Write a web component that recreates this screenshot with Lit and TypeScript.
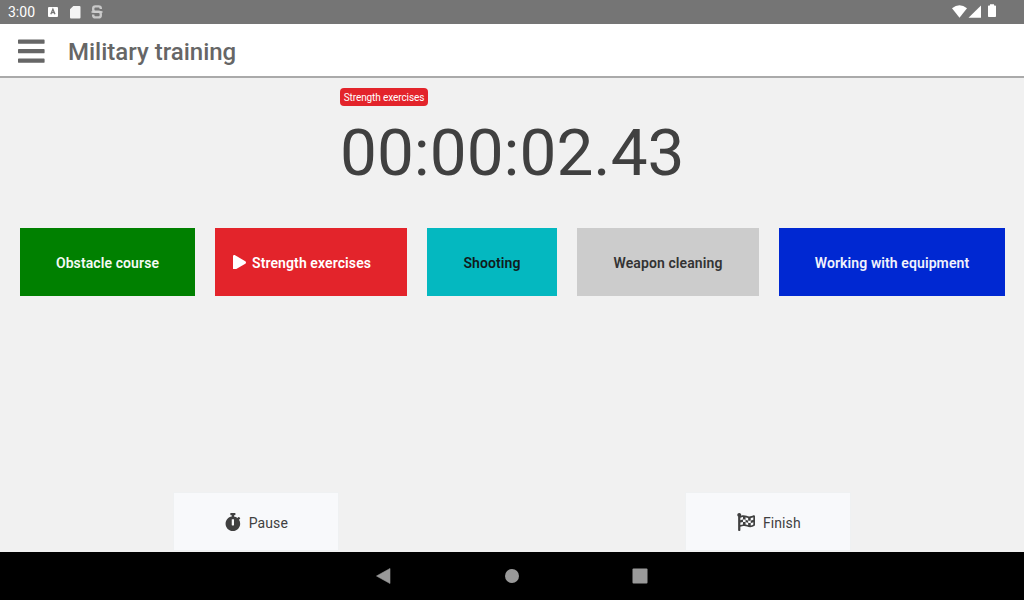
import { LitElement, html, css, svg } from "lit";
import { customElement } from "lit/decorators.js";
import { styleMap } from "lit/directives/style-map.js";

const BARS = "M16 132h416c8.837 0 16-7.163 16-16V76c0-8.837-7.163-16-16-16H16C7.163 60 0 67.163 0 76v40c0 8.837 7.163 16 16 16zm0 160h416c8.837 0 16-7.163 16-16v-40c0-8.837-7.163-16-16-16H16c-8.837 0-16 7.163-16 16v40c0 8.837 7.163 16 16 16zm0 160h416c8.837 0 16-7.163 16-16v-40c0-8.837-7.163-16-16-16H16c-8.837 0-16 7.163-16 16v40c0 8.837 7.163 16 16 16z";
const STOPWATCH = "M432 304c0 114.900-93.100 208-208 208S16 418.900 16 304c0-104 76.300-190.200 176-205.500V64h-28c-6.600 0-12-5.400-12-12V12c0-6.600 5.400-12 12-12h120c6.600 0 12 5.400 12 12v40c0 6.600-5.400 12-12 12h-28v34.500c37.500 5.800 71.700 21.600 99.700 44.600l27.500-27.500c4.700-4.700 12.300-4.700 17 0l28.300 28.300c4.700 4.700 4.700 12.300 0 17l-29.400 29.400-.6.6C419.700 223.300 432 262.200 432 304zm-176 36V188.500c0-6.600-5.400-12-12-12h-40c-6.600 0-12 5.400-12 12V340c0 6.600 5.400 12 12 12h40c6.600 0 12-5.400 12-12z";
const FLAG = "M243.2 189.900V258c26.100 5.900 49.300 15.600 73.600 22.300v-68.200c-26-5.800-49.400-15.500-73.600-22.200zm223.300-123c-34.300 15.900-76.500 31.900-117 31.900C296 98.800 251.700 64 184.300 64c-25 0-47.300 4.400-68 12 2.800-7.300 4.100-15.200 3.600-23.600C118.100 24 94.800 1.200 66.300 0 34.300-1.300 8 24.300 8 56c0 19 9.500 35.800 24 45.900V488c0 13.300 10.700 24 24 24h16c13.300 0 24-10.700 24-24v-94.400c28.300-12.100 63.600-22.100 114.400-22.100 53.600 0 97.800 34.800 165.200 34.800 48.200 0 86.700-16.300 122.500-40.900 8.700-6 13.800-15.800 13.800-26.400V95.900c.1-23.300-24.200-38.800-45.400-29zM169.600 325.500c-25.800 2.700-50 8.200-73.600 16.600v-70.500c26.200-9.300 47.500-15 73.600-17.400v71.300zM464 191c-23.600 9.800-46.300 19.500-73.600 23.900V286c24.800-3.400 51.400-11.800 73.600-26v70.500c-25.100 16.100-48.500 24.700-73.600 27.100V286c-27 3.700-47.900 1.500-73.600-5.600v67.400c-23.900-7.400-47.300-16.700-73.600-21.300V258c-19.700-4.400-40.800-6.800-73.600-3.800v-70c-22.400 3.100-44.600 10.200-73.600 20.900v-70.500c33.200-12.200 50.100-19.800 73.600-22v71.600c27-3.700 48.400-1.300 73.600 5.700v-67.400c23.700 7.400 47.200 16.700 73.600 21.300v68.400c23.700 5.300 47.600 6.900 73.600 2.700V143c27-4.800 52.300-13.600 73.600-22.500z";
const PLAY = "M424.400 214.700L72.400 6.600C43.800-10.300 0 6.100 0 47.900V464c0 37.500 40.700 60.100 72.400 41.300l352-208c31.400-18.500 31.500-64.100 0-82.600z";

interface Activity {
  name: string;
  width: number;
  background: string;
  color: string;
  active?: boolean;
}

const activities: Activity[] = [
  { name: "Obstacle course", width: 175, background: "#008000", color: "#f4faf4" },
  { name: "Strength exercises", width: 192, background: "#e3242b", color: "#ffffff", active: true },
  { name: "Shooting", width: 130, background: "#04b8c0", color: "#101c1d" },
  { name: "Weapon cleaning", width: 182, background: "#cccccc", color: "#333333" },
  { name: "Working with equipment", width: 226, background: "#0028d2", color: "#f0f2fc" },
];

@customElement("app-root")
export class AppRoot extends LitElement {
  static styles = css`
    :host {
      display: flex;
      flex-direction: column;
      width: 1024px;
      height: 600px;
      overflow: hidden;
      background: #f1f1f1;
      font-family: Roboto, sans-serif;
      color: #404040;
    }
    svg { display: block; flex: none; }
    .status {
      display: flex;
      flex: none;
      height: 24px;
      background: #757575;
      color: #fff;
      justify-content: space-between;
    }
    .clock {
      font-size: 14px;
      line-height: 25px;
      padding-left: 8px;
      width: 38px;
      white-space: nowrap;
    }
    .left { display: flex; }
    .header {
      display: flex;
      flex: none;
      box-sizing: border-box;
      height: 54px;
      background: #fff;
      border-bottom: 2px solid #aaa;
      padding-left: 18px;
      gap: 23.400px;
    }
    .menu { margin-top: 11.500px; color: #666; }
    .title {
      margin: 0;
      font-size: 24px;
      font-weight: 500;
      line-height: 57px;
      height: 52px;
      color: #666;
      white-space: nowrap;
    }
    .main { flex: 1; display: flex; flex-direction: column; min-height: 0; }
    .timer { width: 344px; height: 150px; margin: 0 auto; padding-top: 10px; box-sizing: border-box; }
    .badge {
      display: block;
      width: 88px;
      height: 18px;
      border-radius: 4px;
      background: #e3242b;
      color: #fff;
      font-size: 10px;
      line-height: 19px;
      letter-spacing: -0.100px;
      text-align: center;
      white-space: nowrap;
    }
    .digits { font-size: 65.700px; line-height: 77px; margin-top: 8px; white-space: nowrap; }
    .activities { display: flex; gap: 20px; padding: 0 19px 0 20px; }
    .activity {
      display: flex;
      align-items: center;
      justify-content: center;
      height: 68px;
      padding-top: 2px;
      box-sizing: border-box;
      font-size: 14px;
      font-weight: 600;
      letter-spacing: 0.100px;
      white-space: nowrap;
    }
    .activity.active { justify-content: flex-start; padding-left: 18px; gap: 6px; }
    .activity svg { margin-top: -2px; }
    .actions { display: flex; margin-top: auto; padding: 0 173px 1px; justify-content: space-between; }
    .action {
      display: flex;
      align-items: center;
      box-sizing: border-box;
      width: 166px;
      height: 59px;
      padding: 3px 0 0 51px;
      background: #f8f9fb;
      border: 1px solid #eff1f2;
      font-size: 14px;
      letter-spacing: 0.080px;
      gap: 8px;
    }
    .action svg { margin-top: -2px; }
    .nav { flex: none; height: 48px; background: #000; }
  `;

  private icon(path: string, width: number, height: number, viewWidth: number) {
    return html`<svg width=${width} height=${height} viewBox="0 0 ${viewWidth} 512" fill="currentColor">${svg`<path d=${path}></path>`}</svg>`;
  }

  render() {
    return html`
      <div class="status">
        <div class="left">
          <span class="clock">3:00</span>
          <svg width="60" height="24" viewBox="46 0 60 24">
            <rect x="48" y="7" width="10" height="10" rx="1" fill="#fff" />
            <path d="M50.800 14.300 52.900 9.200 55 14.300M51.600 12.700h2.600" fill="none" stroke="#757575" stroke-width="1.300" />
            <path d="M73.300 6h6.200q1 0 1 1v10.500q0 1-1 1h-8.500q-1 0-1-1V9.200z" fill="#f4f4f4" />
            <path d="M100.800 8.900V8.600q0-2.200-2.200-2.200h-3.200Q93.200 6.400 93.200 8.600v1q0 2.200 2.200 2.200h3.200q2.200 0 2.200 2.200v1.200q0 2.200-2.200 2.200h-3.200q-2.200 0-2.200-2.200v-.7" fill="none" stroke="#c8c8c8" stroke-width="2.400" />
            <path d="M91.500 12h11" stroke="#d0d0d0" stroke-width="1.600" />
          </svg>
        </div>
        <svg width="74" height="24" viewBox="950 0 74 24" fill="#fff">
          <path d="M952 8.200Q959.500 2.300 967 8.200L959.500 17.800z" />
          <path d="M981 5.500V17.800H968.500z" />
          <path d="M990 4.200h4v1.200h1.200q.8 0 .8.800v10q0 .8-.8.800h-6.400q-.8 0-.8-.8v-10q0-.8.800-.8H990z" />
        </svg>
      </div>
      <header class="header">
        <div class="menu">${this.icon(BARS, 26.6, 30.4, 448)}</div>
        <h1 class="title">Military training</h1>
      </header>
      <main class="main">
        <section class="timer">
          <span class="badge">Strength exercises</span>
          <div class="digits">00:00:02.43</div>
        </section>
        <section class="activities">
          ${activities.map(
            (a) => html`<div
              class="activity ${a.active ? "active" : ""}"
              style=${styleMap({ width: `${a.width}px`, background: a.background, color: a.color })}
            >${a.active ? this.icon(PLAY, 13, 14.9, 448) : ""}<span>${a.name}</span></div>`
          )}
        </section>
        <section class="actions">
          <div class="action">${this.icon(STOPWATCH, 15.75, 18, 448)}<span>Pause</span></div>
          <div class="action">${this.icon(FLAG, 18, 18, 512)}<span>Finish</span></div>
        </section>
      </main>
      <nav class="nav">
        <svg width="1024" height="48" viewBox="0 552 1024 48" fill="#999">
          <path d="M376.500 576 390 568.500V583.500z" stroke="#999" stroke-width=".6" stroke-linejoin="round" />
          <circle cx="512" cy="576" r="7" />
          <rect x="632.500" y="568.500" width="15" height="15" rx="1" />
        </svg>
      </nav>
    `;
  }
}
